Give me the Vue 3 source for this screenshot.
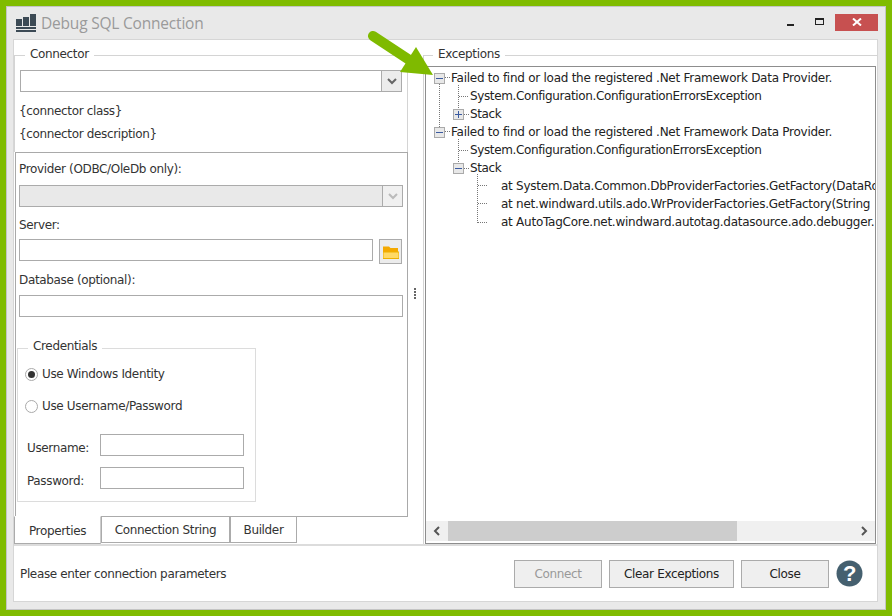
<script setup>
const rows = [
  { text: 'Failed to find or load the registered .Net Framework Data Provider.', level: 0, box: '-' },
  { text: 'System.Configuration.ConfigurationErrorsException', level: 1 },
  { text: 'Stack', level: 1, box: '+' },
  { text: 'Failed to find or load the registered .Net Framework Data Provider.', level: 0, box: '-' },
  { text: 'System.Configuration.ConfigurationErrorsException', level: 1 },
  { text: 'Stack', level: 1, box: '-' },
  { text: 'at System.Data.Common.DbProviderFactories.GetFactory(DataRow', level: 2 },
  { text: 'at net.windward.utils.ado.WrProviderFactories.GetFactory(String', level: 2 },
  { text: 'at AutoTagCore.net.windward.autotag.datasource.ado.debugger.', level: 2 },
]
</script>

<template>
  <div class="frame">
    <div class="window">
      <header class="titlebar">
        <svg class="logo" width="22" height="20" viewBox="0 0 22 20">
          <rect x="0" y="6" width="6" height="7" fill="#3c4a55" />
          <rect x="7" y="4" width="6" height="9" fill="#3c4a55" />
          <rect x="14" y="1" width="6" height="12" fill="#3c4a55" />
          <rect x="0" y="14" width="20" height="2" fill="#3c4a55" />
          <rect x="0" y="17" width="20" height="2" fill="#3c4a55" />
        </svg>
        <span class="title">Debug SQL Connection</span>
        <div class="controls">
          <span class="min"></span>
          <span class="max"></span>
          <span class="close">
            <svg width="10" height="8" viewBox="0 0 10 8"><path d="M1 0.5 L9 7.5 M9 0.5 L1 7.5" stroke="#fff" stroke-width="2" /></svg>
          </span>
        </div>
      </header>

      <main class="content">
        <div class="panes">
          <section class="left">
            <div class="group connector">
              <span class="legend">Connector</span>
              <div class="combo">
                <span class="combo-arrow">
                  <svg width="10" height="7" viewBox="0 0 10 7"><path d="M1 1 L5 5 L9 1" fill="none" stroke="#666" stroke-width="2" /></svg>
                </span>
              </div>
              <p class="meta first">{connector class}</p>
              <p class="meta">{connector description}</p>
            </div>

            <div class="tabpage">
              <label class="lbl provider">Provider (ODBC/OleDb only):</label>
              <div class="combo disabled">
                <span class="combo-arrow">
                  <svg width="10" height="7" viewBox="0 0 10 7"><path d="M1 1 L5 5 L9 1" fill="none" stroke="#bbb" stroke-width="2" /></svg>
                </span>
              </div>
              <label class="lbl server">Server:</label>
              <div class="server-row">
                <div class="input grow"></div>
                <button class="folder">
                  <svg width="16" height="14" viewBox="0 0 16 14">
                    <path d="M0 1.5 H6 L7.5 3 H15 V13 H0 Z" fill="#f4a900" />
                    <path d="M0 7 H16 V13.5 H0 Z" fill="#ffd966" stroke="#eeb000" stroke-width="1" />
                  </svg>
                </button>
              </div>
              <label class="lbl database">Database (optional):</label>
              <div class="input"></div>

              <div class="credentials">
                <span class="legend cred-legend">Credentials</span>
                <div class="radio-row first-radio"><span class="radio on"></span>Use Windows Identity</div>
                <div class="radio-row second-radio"><span class="radio"></span>Use Username/Password</div>
                <div class="cred-grid">
                  <span>Username:</span><div class="input small"></div>
                  <span>Password:</span><div class="input small"></div>
                </div>
              </div>
            </div>

            <nav class="tabs">
              <span class="tab active">Properties</span>
              <span class="tab cs">Connection String</span>
              <span class="tab builder">Builder</span>
            </nav>
          </section>

          <div class="splitter"><i></i><i></i><i></i><i></i></div>

          <section class="right">
            <span class="legend ex-legend">Exceptions</span>
            <div class="treebox">
              <div class="tree">
                <svg class="lines" width="120" height="170" viewBox="0 0 120 170">
                  <g stroke="#777" stroke-width="1" stroke-dasharray="1 1" fill="none">
                    <path d="M13.5 17 V60" />
                    <path d="M19 10.5 H24" />
                    <path d="M32.5 18 V41" />
                    <path d="M33 29.5 H42" />
                    <path d="M38 47.5 H43" />
                    <path d="M19 64.5 H24" />
                    <path d="M32.5 72 V95" />
                    <path d="M33 83.5 H42" />
                    <path d="M38 101.5 H43" />
                    <path d="M51.5 107 V156" />
                    <path d="M52 118.5 H62" />
                    <path d="M52 136.5 H62" />
                    <path d="M52 155.5 H62" />
                  </g>
                </svg>
                <div v-for="(r, i) in rows" :key="i" class="row" :class="'lv' + r.level">
                  <span v-if="r.box" class="exp" :class="{ plus: r.box === '+' }"></span>
                  <span class="txt">{{ r.text }}</span>
                </div>
              </div>
              <div class="hscroll">
                <span class="sb-btn">
                  <svg width="8" height="10" viewBox="0 0 8 10"><path d="M6 1 L2 5 L6 9" fill="none" stroke="#555" stroke-width="2" /></svg>
                </span>
                <div class="track"><div class="thumb"></div></div>
                <span class="sb-btn">
                  <svg width="8" height="10" viewBox="0 0 8 10"><path d="M2 1 L6 5 L2 9" fill="none" stroke="#555" stroke-width="2" /></svg>
                </span>
              </div>
            </div>
          </section>
        </div>

        <footer class="status">
          <span class="msg">Please enter connection parameters</span>
          <button class="btn off">Connect</button>
          <button class="btn clear">Clear Exceptions</button>
          <button class="btn">Close</button>
          <svg class="help" width="27" height="27" viewBox="0 0 27 27">
            <circle cx="13.5" cy="13.5" r="13" fill="#45606f" />
            <text x="13.5" y="21" text-anchor="middle" class="q">?</text>
          </svg>
        </footer>
      </main>

      <svg class="pointer" width="70" height="48" viewBox="0 0 70 48">
        <path d="M7 6 L48 33" fill="none" stroke="#7fba00" stroke-width="10" stroke-linecap="round" />
        <path d="M50 17 L67 45 L34 42 Z" fill="#7fba00" />
      </svg>
    </div>
  </div>
</template>

<style scoped>
.frame {
  width: 892px;
  height: 616px;
  box-sizing: border-box;
  border: 6px solid #80bc00;
  font-family: "DejaVu Sans", sans-serif;
  font-size: 12px;
  color: #333;
  letter-spacing: -0.35px;
}
.window {
  position: relative;
  height: 100%;
  box-sizing: border-box;
  border: 1px solid #c4c4c4;
  background: #e9e9e9;
  padding: 0 7px 7px 6px;
  display: flex;
  flex-direction: column;
}
.titlebar {
  height: 32px;
  flex: none;
  display: flex;
  align-items: center;
}
.logo { margin: 0 3px 0 3px; flex: none; }
.title {
  font-family: "Open Sans", sans-serif;
  font-size: 15.5px;
  letter-spacing: -0.2px;
  color: #9a9a9a;
}
.controls {
  margin-left: auto;
  display: flex;
  align-items: center;
  height: 17px;
  margin-top: -2px;
  margin-right: 0;
}
.min { width: 7px; height: 2px; background: #222; margin-top: 5px; margin-right: 21px; }
.max { width: 7px; height: 4px; border: 1px solid #222; border-top-width: 2px; margin-right: 11px; margin-top: -2px; }
.close {
  width: 43px;
  height: 17px;
  background: #c75050;
  display: flex;
  align-items: center;
  justify-content: center;
}
.content {
  flex: 1;
  min-height: 0;
  background: #fff;
  border: 1px solid #d6d6d6;
  display: flex;
  flex-direction: column;
}
.panes {
  flex: 1;
  min-height: 0;
  display: flex;
  border-bottom: 2px solid #dcdcdc;
}
.left {
  width: 395px;
  flex: none;
  display: flex;
  flex-direction: column;
}
.legend {
  position: absolute;
  background: #fff;
  padding: 0 5px;
}
.group.connector {
  position: relative;
  width: 394px;
  height: 97px;
  box-sizing: border-box;
  margin-top: 15px;
  border: 1px solid #d4d4d4;
  border-bottom: 0;
  padding: 14px 5px 0;
}
.connector .legend { left: 10px; top: -9px; }
.combo {
  position: relative;
  height: 22px;
  box-sizing: border-box;
  border: 1px solid #ababab;
  background: #fff;
  width: 382px;
}
.combo-arrow {
  position: absolute;
  right: 0;
  top: 0;
  bottom: 0;
  width: 19px;
  background: #ececec;
  border-left: 1px solid #ababab;
  display: flex;
  align-items: center;
  justify-content: center;
}
.combo.disabled { background: #e9e9e9; width: 384px; }
.combo.disabled .combo-arrow { background: #f0f0f0; }
.meta { margin: 0 0 0 -1px; height: 23px; line-height: 23px; }
.meta.first { margin-top: 8px; }
.tabpage {
  height: 365px;
  box-sizing: border-box;
  border: 1px solid #a9a9a9;
  margin-left: 1px;
  padding: 0 3px;
  flex: none;
  width: 393px;
}
.lbl { display: block; height: 18px; line-height: 18px; }
.provider { margin-top: 7px; margin-bottom: 7px; }
.server { margin-top: 9px; margin-bottom: 5px; }
.database { margin-top: 7px; margin-bottom: 6px; }
.server-row { display: flex; align-items: flex-start; }
.input {
  height: 22px;
  box-sizing: border-box;
  border: 1px solid #ababab;
  background: #fff;
  width: 384px;
}
.input.grow { width: 354px; }
.folder {
  width: 23px;
  height: 25px;
  margin-left: 6px;
  padding: 0;
  border: 1px solid #ababab;
  background: #ececec;
  display: flex;
  align-items: center;
  justify-content: center;
}
.credentials {
  position: relative;
  width: 239px;
  height: 154px;
  box-sizing: border-box;
  border: 1px solid #dcdcdc;
  margin: 31px 0 0 -2px;
}
.cred-legend { left: 10px; top: -10px; }
.radio-row { display: flex; align-items: center; height: 18px; padding-left: 7px; }
.first-radio { margin-top: 16px; }
.second-radio { margin-top: 14px; }
.radio {
  width: 11px;
  height: 11px;
  border: 1px solid #aaa;
  border-radius: 50%;
  margin-right: 4px;
  position: relative;
  background: #fff;
}
.radio.on::after {
  content: "";
  position: absolute;
  left: 2px;
  top: 2px;
  width: 7px;
  height: 7px;
  border-radius: 50%;
  background: #333;
}
.cred-grid {
  display: grid;
  grid-template-columns: 73px 144px;
  row-gap: 11px;
  align-items: center;
  margin: 19px 0 0 9px;
}
.cred-grid span { padding-top: 6px; }
.input.small { width: 144px; }
.tabs { display: flex; align-items: flex-start; height: 28px; margin-top: -1px; position: relative; }
.tab {
  box-sizing: border-box;
  height: 27px;
  line-height: 26px;
  border: 1px solid #ababab;
  text-align: center;
  background: #fff;
}
.tab.active { width: 87px; height: 28px; line-height: 29px; border-top-color: #fff; border-right-color: #ccc; border-left-color: #ababab; }
.tab.cs { width: 129px; }
.tab.builder { width: 67px; margin-left: 0; }
.splitter {
  width: 14px;
  box-sizing: border-box;
  padding: 2px 3px 0 0;
  flex: none;
  display: flex;
  flex-direction: column;
  align-items: center;
  justify-content: center;
  gap: 1px;
}
.splitter i { width: 2px; height: 2px; background: #666; }
.right {
  position: relative;
  flex: 1;
  min-width: 0;
  margin-top: 15px;
  border-top: 1px solid #d4d4d4;
  border-left: 1px solid #d4d4d4;
  padding: 10px 1px 0 1px;
  display: flex;
}
.ex-legend { left: 9px; top: -9px; }
.treebox {
  flex: 1;
  min-width: 0;
  border: 1px solid #8d8d8d;
  display: flex;
  flex-direction: column;
  margin-bottom: 0;
}
.tree {
  position: relative;
  flex: 1;
  min-height: 0;
  overflow: hidden;
  padding-top: 2px;
}
.lines { position: absolute; left: 0; top: 0; }
.row { position: relative; height: 18px; line-height: 18px; white-space: nowrap; color: #222; }
.lv0 { padding-left: 25px; letter-spacing: -0.26px; }
.lv1 { padding-left: 44px; letter-spacing: -0.37px; }
.lv2 { padding-left: 75px; letter-spacing: -0.25px; }
.exp {
  position: absolute;
  top: 4px;
  width: 9px;
  height: 9px;
  border: 1px solid #aaa;
  background: #e8e8e8;
}
.lv0 .exp { left: 8px; }
.lv1 .exp { left: 27px; }
.exp::before {
  content: "";
  position: absolute;
  left: 1px;
  right: 1px;
  top: 4px;
  height: 1px;
  background: #3a5aa0;
}
.exp.plus::after {
  content: "";
  position: absolute;
  top: 1px;
  bottom: 1px;
  left: 4px;
  width: 1px;
  background: #3a5aa0;
}
.hscroll {
  flex: none;
  height: 20px;
  margin-bottom: 2px;
  display: flex;
  background: #f0f0f0;
}
.sb-btn { width: 22px; flex: none; display: flex; align-items: center; justify-content: center; }
.track { flex: 1; }
.thumb { width: 289px; height: 100%; background: #cdcdcd; }
.status {
  height: 55px;
  flex: none;
  display: flex;
  align-items: center;
  padding-left: 6px;
}
.msg { margin-right: auto; }
.btn {
  font: inherit;
  letter-spacing: inherit;
  height: 28px;
  width: 88px;
  padding: 0;
  border: 1px solid #ababab;
  background: #efefef;
  color: #222;
  margin-right: 7px;
}
.btn.off { color: #999; }
.btn.clear { width: 125px; }
.help { margin-right: 14px; }
.q { font-family: "Liberation Sans", sans-serif; font-size: 22px; font-weight: 700; fill: #fff; }
.pointer {
  position: absolute;
  left: 359px;
  top: 23px;
  z-index: 3;
}
</style>
